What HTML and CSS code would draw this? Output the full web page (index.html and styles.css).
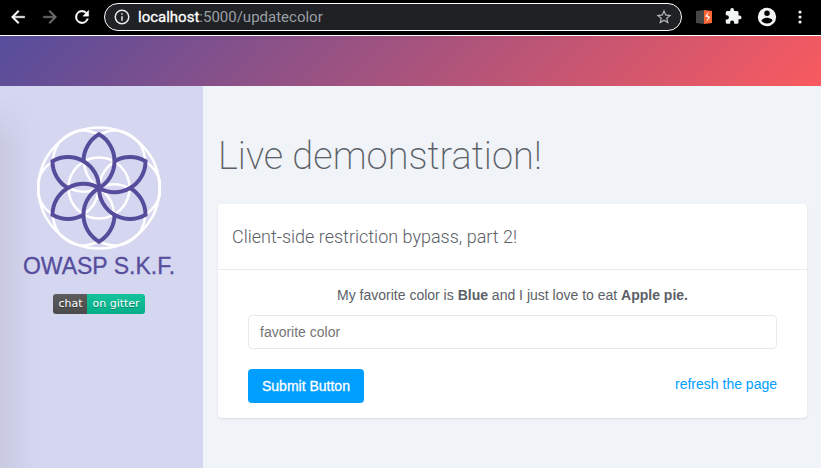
FILE: index.html
```html
<!DOCTYPE html>
<html lang="en">
<head>
<meta charset="utf-8">
<title>Live demonstration</title>
<link rel="stylesheet" href="styles.css">
</head>
<body>
<div class="browser">
  <button class="tool" aria-label="Back"><svg width="20" height="20" viewBox="0 0 24 24"><path fill="#fff" stroke="#fff" stroke-width=".5" d="M20 11H7.800l5.600-5.600L12 4l-8 8 8 8 1.400-1.400L7.800 13H20z"/></svg></button>
  <button class="tool" aria-label="Forward"><svg width="20" height="20" viewBox="0 0 24 24"><path fill="#6f6f6f" stroke="#6f6f6f" stroke-width=".5" d="M4 11h12.200l-5.600-5.600L12 4l8 8-8 8-1.400-1.400 5.600-5.600H4z"/></svg></button>
  <button class="tool" aria-label="Reload"><svg width="20" height="20" viewBox="0 0 24 24"><path fill="#fff" stroke="#fff" stroke-width=".5" d="M17.650 6.350A8 8 0 1 0 19.730 14h-2.080A6 6 0 1 1 12 6c1.660 0 3.140.69 4.220 1.780L13 11h7V4z"/></svg></button>
  <div class="address">
    <svg width="18" height="18" viewBox="0 0 24 24"><path fill="#e8eaed" d="M11 7h2v2h-2zm0 4h2v6h-2zm1-9a10 10 0 1 0 0 20 10 10 0 0 0 0-20m0 18a8 8 0 1 1 0-16 8 8 0 0 1 0 16"/></svg>
    <span class="url"><span class="host">localhost</span>:5000/updatecolor</span>
    <svg width="18" height="18" viewBox="0 0 24 24"><path fill="#b8babd" d="m22 9.240-7.190-.62L12 2 9.190 8.630 2 9.240l5.460 4.730L5.820 21 12 17.270 18.180 21l-1.630-7.030zM12 15.400l-3.760 2.270 1-4.280-3.320-2.880 4.380-.38L12 6.100l1.710 4.040 4.380.38-3.320 2.880 1 4.280z"/></svg>
  </div>
  <div class="extensions">
    <svg width="16" height="14" viewBox="0 0 16 14"><path fill="#474747" d="M0 1l8-1v14l-8-1z"/><path fill="#ff6633" d="M8 0l8 1v12l-8 1z"/><path fill="#fff" d="M12.800 1.500 9.300 6.300l2.900 1.200L10 12.500l4.300-5.400-2.900-1.300z"/></svg>
    <svg width="18" height="18" viewBox="1 1 24 24"><path fill="#f1f3f4" d="M20.500 11H19V7a2 2 0 0 0-2-2h-4V3.500a2.500 2.500 0 0 0-5 0V5H4a2 2 0 0 0-2 2v3.800h1.500a2.700 2.700 0 0 1 0 5.400H2V20c0 1.100.9 2 2 2h3.800v-1.500a2.700 2.700 0 0 1 5.400 0V22H17a2 2 0 0 0 2-2v-4h1.500a2.500 2.500 0 0 0 0-5"/></svg>
    <svg width="22" height="22" viewBox="0 0 24 24"><path fill="#f1f3f4" d="M12 2a10 10 0 1 0 0 20 10 10 0 0 0 0-20m0 3a3 3 0 1 1 0 6 3 3 0 0 1 0-6m0 14.200a7.200 7.200 0 0 1-6-3.220c.03-1.990 4-3.080 6-3.080s5.970 1.090 6 3.080a7.200 7.200 0 0 1-6 3.220"/></svg>
    <svg width="18" height="18" viewBox="0 0 18 18"><g fill="#f1f3f4"><circle cx="9" cy="4" r="1.600"/><circle cx="9" cy="9" r="1.600"/><circle cx="9" cy="14" r="1.600"/></g></svg>
  </div>
</div>
<header class="banner"></header>
<div class="page">
  <aside class="sidebar">
    <svg class="logo" width="124" height="124" viewBox="-62 -62 124 124" fill="none">
      <defs>
        <circle id="ring" cx="0" cy="-31" r="30.500"/>
        <path id="petal" d="M0 0A31 31 0 0 0 0-53.700A31 31 0 0 0-15.500-26.850"/>
      </defs>
      <g stroke="#fff" stroke-width="2.500">
        <circle r="60.500"/><circle r="30.500"/>
        <use href="#ring" transform="rotate(30)"/><use href="#ring" transform="rotate(90)"/><use href="#ring" transform="rotate(150)"/><use href="#ring" transform="rotate(210)"/><use href="#ring" transform="rotate(270)"/><use href="#ring" transform="rotate(330)"/>
      </g>
      <g stroke="#554d9c" stroke-width="4">
        <use href="#petal"/><use href="#petal" transform="rotate(60)"/><use href="#petal" transform="rotate(120)"/><use href="#petal" transform="rotate(180)"/><use href="#petal" transform="rotate(240)"/><use href="#petal" transform="rotate(300)"/>
      </g>
    </svg>
    <div class="brand">OWASP S.K.F.</div>
    <a class="badge" href="#"><span class="badge-chat">chat</span><span class="badge-gitter">on gitter</span></a>
  </aside>
  <main class="content">
    <h1>Live demonstration!</h1>
    <section class="card">
      <h2>Client-side restriction bypass, part 2!</h2>
      <form class="form">
        <p>My favorite color is <b>Blue</b> and I just love to eat <b>Apple pie.</b></p>
        <input type="text" placeholder="favorite color" aria-label="favorite color">
        <div class="actions">
          <button class="submit" type="submit">Submit Button</button>
          <a href="#">refresh the page</a>
        </div>
      </form>
    </section>
  </main>
</div>
</body>
</html>
```
FILE: styles.css
```css
* { box-sizing: border-box; }
body {
  margin: 0;
  min-height: 100vh;
  display: flex;
  flex-direction: column;
  background: #f0f3f8;
  color: #5b6066;
  font: 14px/20px "Liberation Sans", Arial, sans-serif;
}
svg { display: block; flex: none; }
.browser {
  display: flex;
  align-items: center;
  height: 36px;
  padding: 0 12px 2px 8px;
  background: #000;
  border-bottom: 1px solid #fff;
}
.tool {
  width: 20px;
  margin-right: 12px;
  padding: 0;
  border: 0;
  background: none;
}
.address {
  flex: 1;
  display: flex;
  align-items: center;
  gap: 7px;
  height: 28px;
  padding: 0 8px;
  border: 1px solid #fff;
  border-radius: 14px;
  background: #202124;
}
.url {
  flex: 1;
  color: #9aa0a6;
  font: 15px/20px Roboto, sans-serif;
}
.host { color: #fff; -webkit-text-stroke: 0.3px; }
.extensions {
  display: flex;
  align-items: center;
  gap: 13px;
  margin-left: 14px;
}
.extensions svg:nth-child(2) { overflow: visible; }
.banner {
  height: 50px;
  background: linear-gradient(135deg, #554d9c, #f95a5f);
}
.page { flex: 1; display: flex; }
.sidebar {
  width: 203px;
  padding: 40px 5px 0 0;
  display: flex;
  flex-direction: column;
  align-items: center;
  background:
    linear-gradient(#d5d6f0 10px, #d5d6f000 60px),
    linear-gradient(90deg, #c9c9e2, #d5d6f0 36px);
}
.brand {
  color: #554d9c;
  font-size: 23px;
  line-height: 32px;
  -webkit-text-stroke: 0.3px;
}
.badge {
  display: flex;
  margin-top: 12px;
  border-radius: 3px;
  overflow: hidden;
  color: #fff;
  font: 11px/20px "DejaVu Sans", sans-serif;
  text-decoration: none;
  text-shadow: 0 1px #0005;
}
.badge-chat { padding: 0 5px; background: linear-gradient(#5c5c5c, #4b4b4b); }
.badge-gitter { padding: 0 5px; background: linear-gradient(#14c29b, #05ae89); }
.content { flex: 1; padding: 44px 14px 0 15px; }
h1 {
  margin: 0 0 22px;
  font: 200 38px/52px Roboto, sans-serif;
}
.card {
  border-radius: 4px;
  background: #fff;
  box-shadow: 0 1px 2px #0000001a;
}
h2 {
  margin: 0;
  padding: 20px 14px;
  border-bottom: 1px solid #ebebeb;
  font: 300 18px/25px Roboto, sans-serif;
}
.form { padding: 15px 30px; }
p { margin: 0 0 10px; text-align: center; }
input {
  display: block;
  width: 100%;
  height: 34px;
  padding: 0 11px;
  border: 1px solid #e8e9eb;
  border-radius: 4px;
  font: inherit;
}
input::placeholder { color: #757575; }
.actions {
  display: flex;
  justify-content: space-between;
  margin-top: 20px;
}
.submit {
  height: 34px;
  padding: 0 14px;
  border: 0;
  border-radius: 4px;
  background: #009eff;
  color: #fff;
  font: inherit;
  -webkit-text-stroke: 0.3px;
}
.actions a { margin-top: 5px; color: #009eff; text-decoration: none; }
```
